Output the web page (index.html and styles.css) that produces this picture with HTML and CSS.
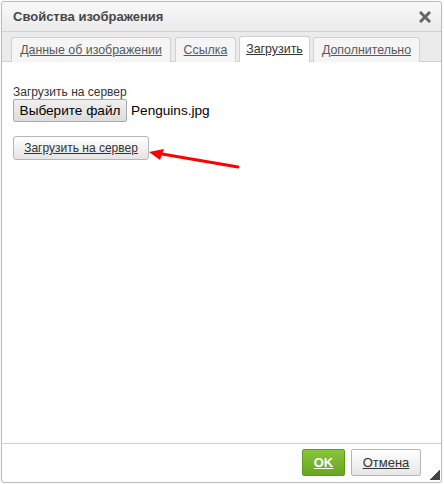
FILE: index.html
```html
<!DOCTYPE html>
<html>
<head>
<meta charset="utf-8">
<link rel="stylesheet" href="styles.css">
</head>
<body>
<div class="dialog">
  <div class="titlebar">
    <span class="title">Свойства изображения</span>
    <span class="close">
      <svg width="12" height="12" viewBox="0 0 12 12"><path d="M2 2 L10 10 M10 2 L2 10" stroke="#666" stroke-width="3" stroke-linecap="square"/></svg>
    </span>
  </div>
  <div class="tabs">
    <a class="tab t1">Данные об изображении</a>
    <a class="tab t2">Ссылка</a>
    <a class="tab t3 active">Загрузить</a>
    <a class="tab t4">Дополнительно</a>
  </div>
  <div class="content">
    <div class="label">Загрузить на сервер</div>
    <div class="filerow">
      <span class="filebtn">Выберите файл</span>
      <span class="filename">Penguins.jpg</span>
    </div>
    <div class="uploadrow">
      <span class="uploadbtn">Загрузить на сервер</span>
      <svg class="arrow" width="100" height="24" viewBox="0 0 100 24">
        <path d="M90 18 L14 5" stroke="#f00" stroke-width="3" stroke-linecap="round"/>
        <path d="M1 3 L16 0 L12 11 Z" fill="#f00"/>
      </svg>
    </div>
  </div>
  <div class="footer">
    <span class="btn ok">OK</span>
    <span class="btn cancel">Отмена</span>
    <span class="grip"></span>
  </div>
</div>
</body>
</html>
```
FILE: styles.css
```css
* { box-sizing: border-box; }
html, body { margin: 0; padding: 0; background: #fff; }
body {
  width: 444px;
  height: 484px;
  padding: 1px 2px 1px 1px;
  font-family: "Liberation Sans", Arial, sans-serif;
  color: #333;
}
.dialog {
  width: 441px;
  height: 482px;
  border: 1px solid #bcbcbc;
  border-radius: 3px;
  display: flex;
  flex-direction: column;
  background: #fff;
  box-shadow: 0 0 2px rgba(0,0,0,0.1);
}
.titlebar {
  height: 30px;
  flex: none;
  background: linear-gradient(#f8f8f8, #ebebeb);
  border-bottom: 1px solid #d2d2d2;
  display: flex;
  align-items: center;
  justify-content: space-between;
  padding: 0 10px 0 11px;
  border-radius: 3px 3px 0 0;
}
.title {
  font-weight: bold;
  font-size: 13px;
  color: #474747;
}
.close { display: flex; }
.tabs {
  flex: none;
  height: 30px;
  background: #ebebeb;
  border-bottom: 1px solid #d1d1d1;
  display: flex;
  align-items: flex-end;
  padding: 0 0 0 9px;
  gap: 3px;
}
.tab {
  height: 25px;
  margin-bottom: -1px;
  border: 1px solid #d1d1d1;
  border-bottom: none;
  border-radius: 3px 3px 0 0;
  background: #f5f5f5;
  font-size: 12.4px;
  color: #595959;
  text-decoration: underline;
  padding-top: 5px;
  text-align: center;
  white-space: nowrap;
}
.t1 { width: 160px; }
.t2 { width: 61px; margin-left: 1px; }
.t3 { width: 71px; }
.t4 { width: 107px; }
.tab.active {
  background: #fff;
  height: 26px;
  color: #333;
}
.content {
  flex: 1;
  padding: 23px 11px 0 11px;
  font-size: 12px;
}
.label {
  font-size: 12px;
  color: #333;
  line-height: 14px;
}
.filerow {
  display: flex;
  align-items: center;
  gap: 4px;
}
.filebtn {
  height: 23px;
  width: 114px;
  border: 1px solid #a9a9a9;
  border-radius: 2px;
  background: linear-gradient(#f0f0f0, #dcdcdc);
  font-size: 13.6px;
  color: #000;
  display: flex;
  align-items: center;
  justify-content: center;
  white-space: nowrap;
}
.filename {
  font-size: 13.6px;
  color: #000;
}
.uploadrow {
  display: flex;
  align-items: flex-start;
  margin-top: 14px;
}
.uploadbtn {
  height: 24px;
  width: 136px;
  border: 1px solid #b6b6b6;
  border-radius: 3px;
  background: linear-gradient(#fff, #e4e4e4);
  font-size: 12px;
  color: #333;
  text-decoration: underline;
  display: flex;
  align-items: center;
  justify-content: center;
}
.arrow { margin-top: 13px; margin-left: -1px; }
.footer {
  flex: none;
  height: 39px;
  border-top: 1px solid #d1d1d1;
  display: flex;
  align-items: center;
  justify-content: flex-end;
  padding: 0 1px 2px 0;
  gap: 6px;
}
.btn {
  height: 27px;
  border-radius: 2px;
  font-size: 13px;
  text-decoration: underline;
  display: flex;
  align-items: center;
  justify-content: center;
}
.ok {
  width: 43px;
  background: linear-gradient(#8ac43f, #69a51f);
  border: 1px solid #5f9a1a;
  color: #fff;
  font-weight: bold;
}
.cancel {
  width: 70px;
  background: linear-gradient(#fff, #e6e6e6);
  border: 1px solid #b6b6b6;
  color: #333;
}
.grip {
  flex: none;
  align-self: flex-end;
  width: 11px;
  height: 11px;
  margin-left: 2px;
  background: linear-gradient(135deg, rgba(255,255,255,0) 50%, #444 50%);
}
```
